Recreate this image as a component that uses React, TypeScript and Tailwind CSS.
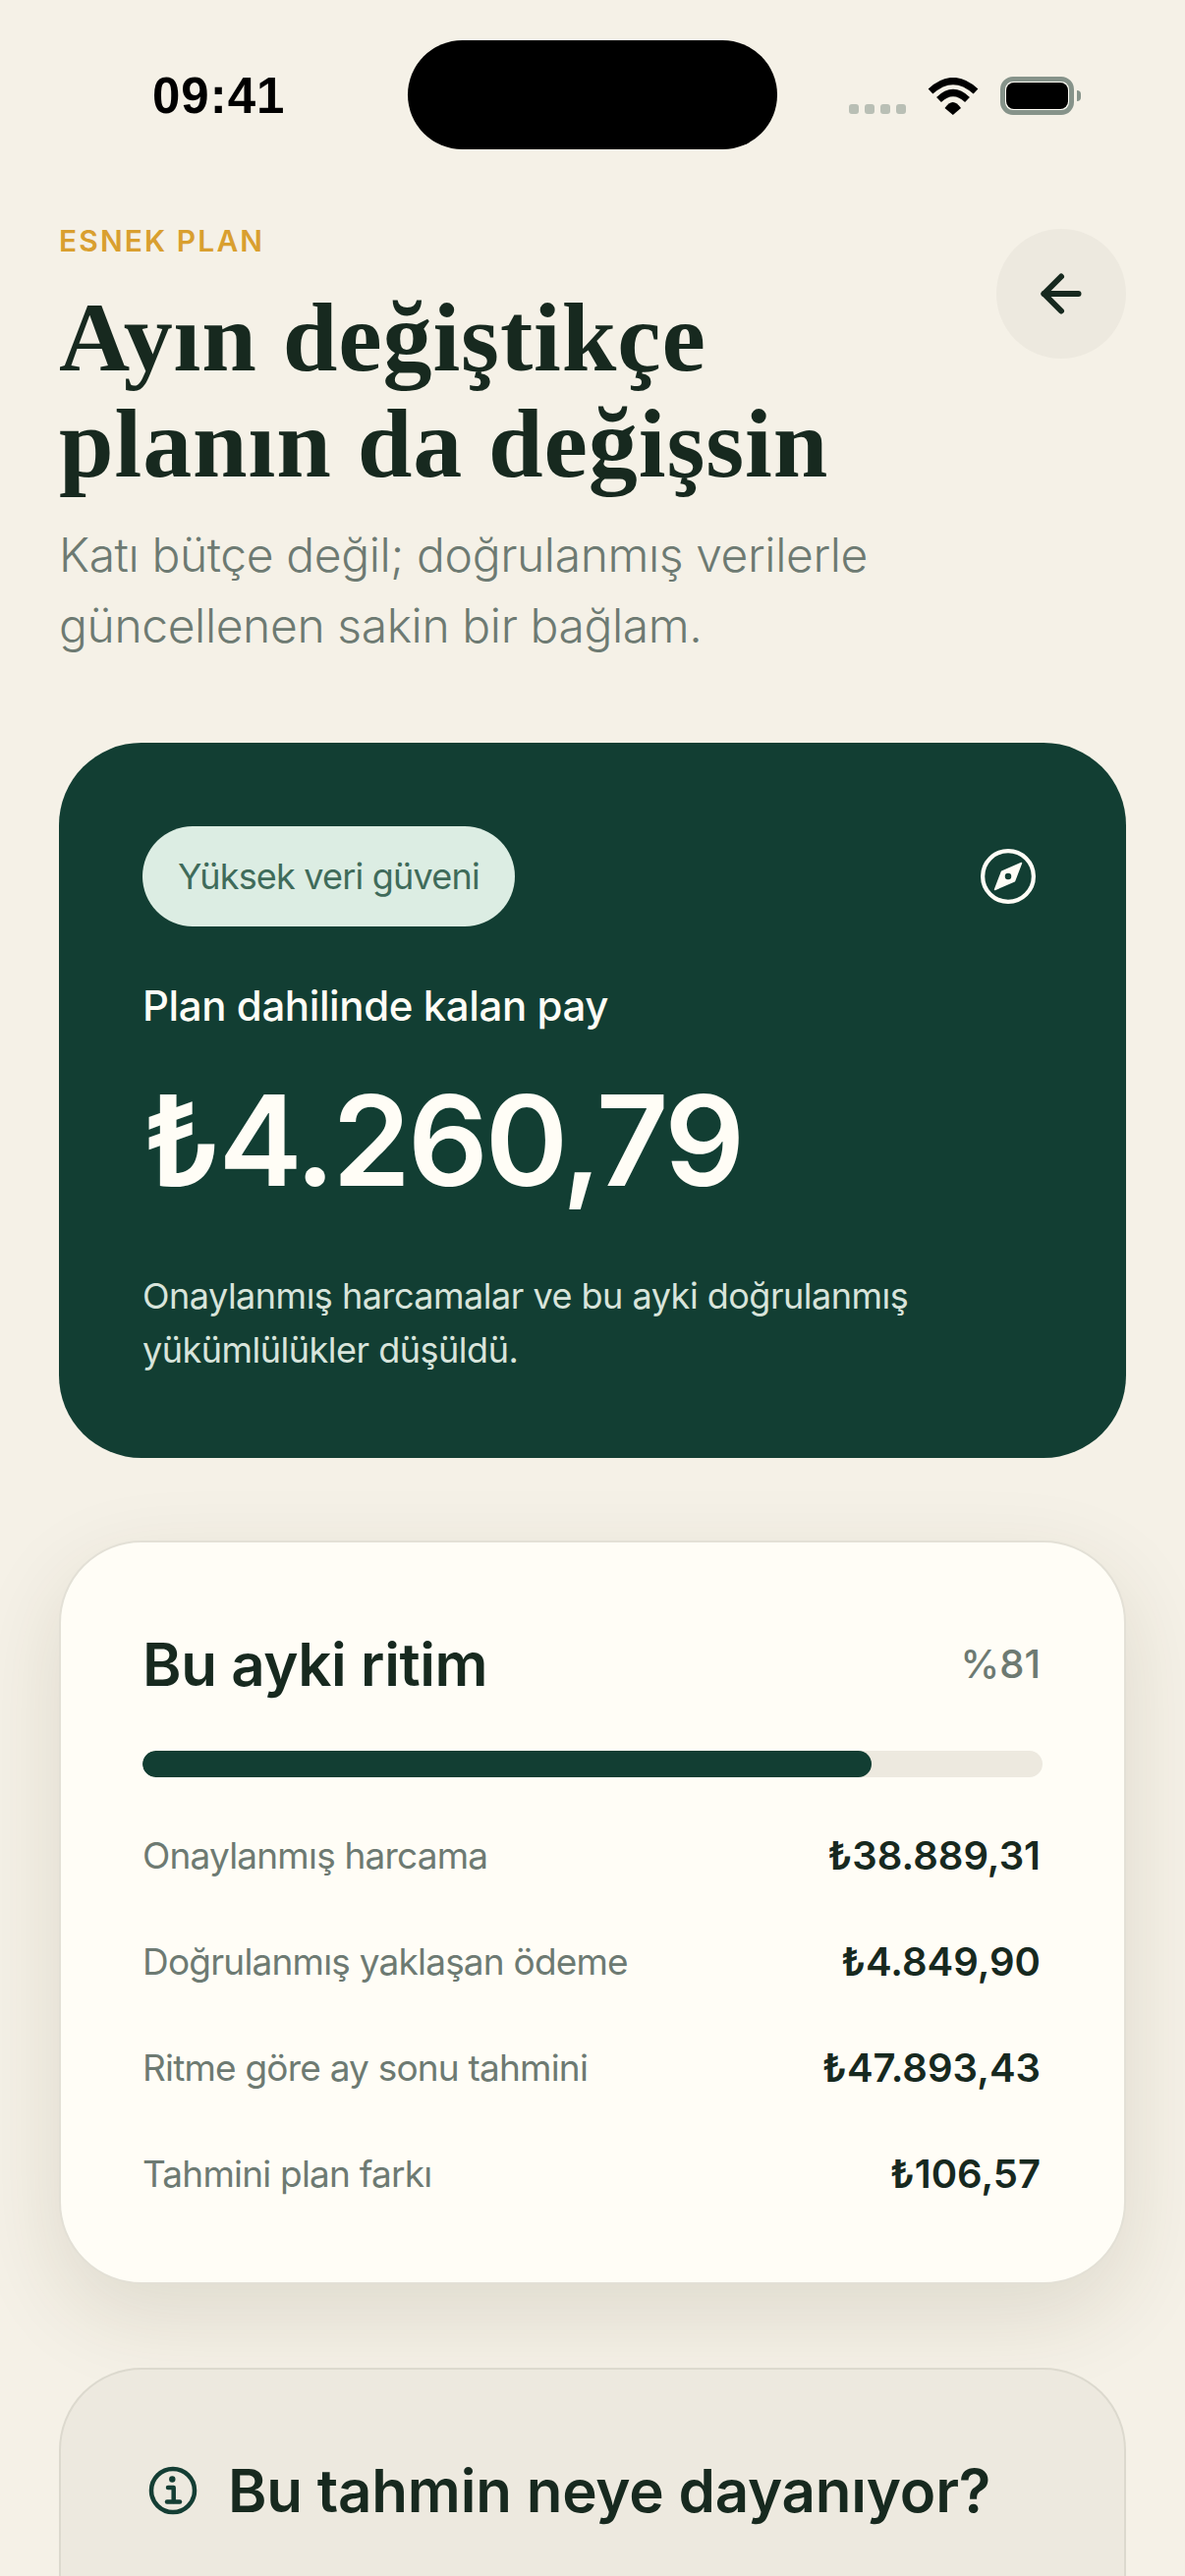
import { ArrowLeft } from "lucide-react";

const sans = "font-['Inter','Noto_Sans',sans-serif]";

function Wifi() {
  return (
    <svg width="52" height="38" viewBox="0 0 52 38" className="block">
      <path d="M3 14 Q26 -7 49 14" fill="none" stroke="#000" strokeWidth="7" />
      <path d="M11.5 22.5 Q26 8.5 40.5 22.5" fill="none" stroke="#000" strokeWidth="7" />
      <path d="M17.5 31 L25.8 38 L34 31 Q25.8 19 17.5 31Z" fill="#000" />
    </svg>
  );
}

function Battery() {
  return (
    <div className="flex items-center gap-[3px]">
      <div className="w-[75px] h-[39px] rounded-[13px] border-[5px] border-[#86938a] bg-[#fffdf6] p-px">
        <div className="h-full w-full rounded-[8px] bg-black" />
      </div>
      <div className="w-[4px] h-[11px] rounded-r-full bg-[#86938a]" />
    </div>
  );
}

function Compass() {
  return (
    <svg width="60" height="60" viewBox="0 0 24 24" fill="none" stroke="#fffdf6" strokeWidth="1.7" strokeLinejoin="round">
      <circle cx="12" cy="12" r="10.35" />
      <path d="M17.4 6.6 14.6 13.9 6.6 17.4 9.4 10.1Z" fill="#fffdf6" stroke="#fffdf6" strokeWidth="0.6" />
      <circle cx="12" cy="12" r="1.3" fill="#123e33" stroke="none" />
    </svg>
  );
}

function Info() {
  return (
    <svg width="52" height="52" viewBox="0 0 52 52" fill="none" stroke="#143e34" strokeWidth="4.5">
      <circle cx="26" cy="26" r="22" />
      <circle cx="25.3" cy="14.5" r="3.2" fill="#143e34" stroke="none" />
      <path d="M21 23h5.7v14" strokeLinejoin="round" strokeLinecap="round" />
      <path d="M20 37.5h13" strokeLinecap="round" />
    </svg>
  );
}

const rows = [
  ["Onaylanmış harcama", "₺38.889,31"],
  ["Doğrulanmış yaklaşan ödeme", "₺4.849,90"],
  ["Ritme göre ay sonu tahmini", "₺47.893,43"],
  ["Tahmini plan farkı", "₺106,57"],
];

export default function App() {
  return (
    <div className={`w-[1206px] h-[2622px] overflow-hidden bg-[#f5f1e7] text-[#17291f] ${sans}`}>
      <div className="relative h-[233px]">
        <div className="absolute left-[415px] top-[41px] w-[376px] h-[111px] rounded-full bg-black" />
        <div className="flex items-start justify-between pl-[155px] pr-[106px] pt-[68px]">
          <span className="font-['Liberation_Sans',sans-serif] font-bold text-[51px] leading-[60px] tracking-[1px] text-black">09:41</span>
          <div className="flex items-end gap-[22px] pt-[10px]">
            <div className="flex gap-[6px] pb-[1px]">
              {[0, 1, 2, 3].map((i) => (
                <div key={i} className="w-[10px] h-[10px] rounded-[3px] bg-[#b9bfb5]" />
              ))}
            </div>
            <Wifi />
            <Battery />
          </div>
        </div>
      </div>

      <div className="px-[60px]">
        <div className="flex items-start justify-between">
          <div className="flex-1">
            <div className="text-[30px] leading-[24px] font-semibold tracking-[2.1px] text-[#d99f2f]">ESNEK PLAN</div>
            <h1 className="mt-[33px] font-['Liberation_Serif',serif] font-bold text-[100px] leading-[108px] tracking-[0.9px] text-[#17291f] whitespace-nowrap">
              Ayın değiştikçe<br />planın da değişsin
            </h1>
          </div>
          <button className="w-[132px] h-[132px] rounded-full bg-[#ede9df] flex items-center justify-center shrink-0">
            <ArrowLeft size={60} strokeWidth={2.4} color="#17291f" />
          </button>
        </div>
        <p className="mt-[23px] text-[48px] leading-[72px] font-light tracking-[-0.4px] text-[#6d7a72]">
          Katı bütçe değil; doğrulanmış verilerle<br />güncellenen sakin bir bağlam.
        </p>

        <section className="mt-[83px] h-[728px] rounded-[84px] bg-[#123e33] px-[85px] pt-[85px] text-[#fffdf6]">
          <div className="flex items-center justify-between">
            <span className="h-[102px] px-[36px] rounded-full bg-[#dcede3] text-[#3f6b5a] text-[36px] tracking-[-0.8px] flex items-center">Yüksek veri güveni</span>
            <span className="mr-[5px]"><Compass /></span>
          </div>
          <div className="mt-[56px] text-[42px] leading-[50px] font-medium tracking-[-0.4px]">Plan dahilinde kalan pay</div>
          <div className="mt-[42px] text-[128px] leading-[140px] font-semibold tracking-[-3px]">₺4.260,79</div>
          <p className="mt-[61px] text-[36px] leading-[55px] tracking-[-0.5px] text-[#d8e4db]">
            Onaylanmış harcamalar ve bu ayki doğrulanmış<br />yükümlülükler düşüldü.
          </p>
        </section>

        <section className="mt-[84px] h-[757px] rounded-[84px] border-[2px] border-[#e3e0d6] bg-[#fffdf6] px-[83px] pt-[88px] shadow-[0_30px_90px_rgba(60,50,20,0.12)]">
          <div className="flex items-center justify-between">
            <h2 className="text-[60px] leading-[72px] font-semibold tracking-[-0.4px]">Bu ayki ritim</h2>
            <span className="text-[40px] text-[#6d7a72] font-medium mr-[2px]">%81</span>
          </div>
          <div className="mt-[52px] h-[27px] rounded-full bg-[#ede9df] overflow-hidden">
            <div className="h-full w-[81%] rounded-full bg-[#123e33]" />
          </div>
          <div className="mt-[26px]">
            {rows.map(([l, v]) => (
              <div key={l} className="h-[108px] flex items-center justify-between">
                <span className="text-[37px] tracking-[-0.8px] text-[#6d7a72]">{l}</span>
                <span className="text-[40px] font-semibold mr-[2px]">{v}</span>
              </div>
            ))}
          </div>
        </section>

        <section className="mt-[85px] h-[400px] rounded-[84px] border-[2px] border-[#dcd9ce] bg-[#ede9df] px-[88px] pt-[87px]">
          <div className="flex items-center gap-[30px]">
            <Info />
            <h2 className="text-[60px] leading-[72px] font-semibold tracking-[-0.2px]">Bu tahmin neye dayanıyor?</h2>
          </div>
        </section>
      </div>
    </div>
  );
}
